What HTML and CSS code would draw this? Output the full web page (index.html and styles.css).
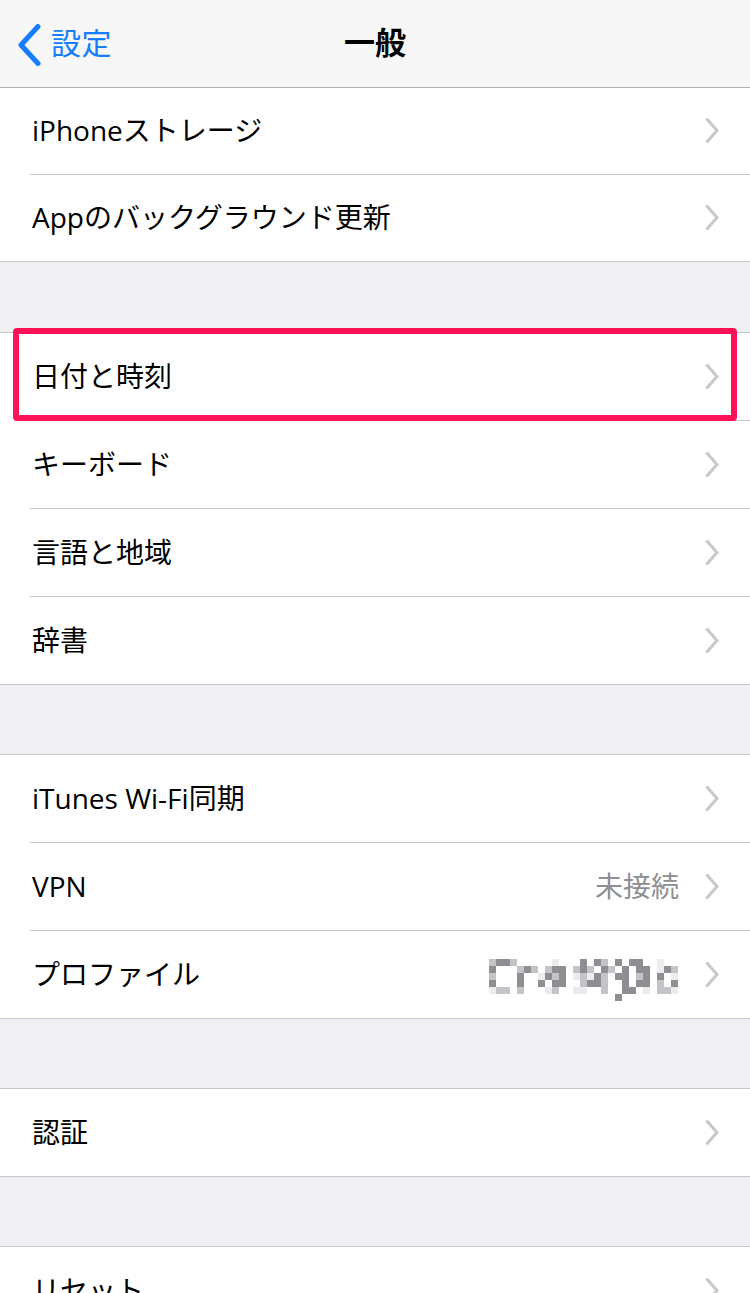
FILE: index.html
```html
<!DOCTYPE html>
<html lang="ja">
<head>
    <meta charset="UTF-8">
    <meta name="viewport" content="width=device-width, initial-scale=1.0">
    <title>一般</title>
    <link rel="stylesheet" href="styles.css">
</head>
<body>
    <div class="screen">
        <header class="navbar">
            <a class="back">
                <svg class="back-icon" width="26" height="44" viewBox="0 0 26 44">
                    <path d="M22 3.5 L5 22 L22 40.5" fill="none" stroke="#147efb" stroke-width="5" stroke-linecap="round" stroke-linejoin="round"/>
                </svg>
                <span>設定</span>
            </a>
            <h1 class="title">一般</h1>
            <span></span>
        </header>

        <section class="group group-top">
            <div class="row">
                <div class="row-body">
                    <span class="label">iPhoneストレージ</span>
                    <svg class="chevron" width="14" height="27" viewBox="0 0 14 27"><path d="M1.5 1.5 L12 13.5 L1.5 25.5"/></svg>
                </div>
            </div>
            <div class="row">
                <div class="row-body">
                    <span class="label">Appのバックグラウンド更新</span>
                    <svg class="chevron" width="14" height="27" viewBox="0 0 14 27"><path d="M1.5 1.5 L12 13.5 L1.5 25.5"/></svg>
                </div>
            </div>
        </section>

        <section class="group group-first">
            <div class="row marked">
                <div class="row-body">
                    <span class="label">日付と時刻</span>
                    <svg class="chevron" width="14" height="27" viewBox="0 0 14 27"><path d="M1.5 1.5 L12 13.5 L1.5 25.5"/></svg>
                </div>
                <div class="highlight"></div>
            </div>
            <div class="row">
                <div class="row-body">
                    <span class="label">キーボード</span>
                    <svg class="chevron" width="14" height="27" viewBox="0 0 14 27"><path d="M1.5 1.5 L12 13.5 L1.5 25.5"/></svg>
                </div>
            </div>
            <div class="row">
                <div class="row-body">
                    <span class="label">言語と地域</span>
                    <svg class="chevron" width="14" height="27" viewBox="0 0 14 27"><path d="M1.5 1.5 L12 13.5 L1.5 25.5"/></svg>
                </div>
            </div>
            <div class="row">
                <div class="row-body">
                    <span class="label">辞書</span>
                    <svg class="chevron" width="14" height="27" viewBox="0 0 14 27"><path d="M1.5 1.5 L12 13.5 L1.5 25.5"/></svg>
                </div>
            </div>
        </section>

        <section class="group">
            <div class="row">
                <div class="row-body">
                    <span class="label">iTunes Wi-Fi同期</span>
                    <svg class="chevron" width="14" height="27" viewBox="0 0 14 27"><path d="M1.5 1.5 L12 13.5 L1.5 25.5"/></svg>
                </div>
            </div>
            <div class="row">
                <div class="row-body">
                    <span class="label">VPN</span>
                    <span class="value">未接続</span>
                    <svg class="chevron" width="14" height="27" viewBox="0 0 14 27"><path d="M1.5 1.5 L12 13.5 L1.5 25.5"/></svg>
                </div>
            </div>
            <div class="row">
                <div class="row-body">
                    <span class="label">プロファイル</span>
                    <!-- profile name is pixelated in the source shot -->
                    <svg class="mosaic" width="189" height="42" viewBox="0 0 27 6" shape-rendering="crispEdges">
                        <path fill="#ececee" d="M9 0h1v1h-1z M24 0h1v1h-1z M24 1h1v1h-1z M7 2h1v1h-1z M12 2h1v1h-1z M14 2h1v1h-1z M26 2h1v1h-1z M0 4h1v1h-1z M8 4h1v1h-1z M12 4h2v1h-2z M22 4h1v1h-1z M26 4h1v1h-1z"/>
                        <path fill="#c4c4c8" d="M0 0h1v1h-1z M3 0h1v1h-1z M16 0h1v1h-1z M4 1h1v1h-1z M6 1h1v1h-1z M8 1h1v1h-1z M12 1h1v1h-1z M14 1h1v1h-1z M17 1h1v1h-1z M26 1h1v1h-1z M0 2h1v1h-1z M9 2h1v1h-1z M13 2h1v1h-1z M16 2h1v1h-1z M21 2h1v1h-1z M13 3h1v1h-1z M16 3h1v1h-1z M24 3h1v1h-1z M1 4h2v1h-2z M4 4h1v1h-1z M9 4h1v1h-1z M16 4h1v1h-1z M24 4h2v1h-2z"/>
                        <path fill="#8e8e93" d="M1 0h2v1h-2z M13 0h1v1h-1z M15 0h1v1h-1z M18 0h1v1h-1z M20 0h2v1h-2z M0 1h1v1h-1z M5 1h1v1h-1z M9 1h2v1h-2z M13 1h1v1h-1z M16 1h1v1h-1z M19 1h1v1h-1z M21 1h2v1h-2z M25 1h1v1h-1z M4 2h1v1h-1z M8 2h1v1h-1z M10 2h1v1h-1z M15 2h1v1h-1z M18 2h2v1h-2z M22 2h1v1h-1z M24 2h1v1h-1z M0 3h1v1h-1z M4 3h1v1h-1z M7 3h1v1h-1z M9 3h2v1h-2z M14 3h2v1h-2z M19 3h1v1h-1z M21 3h2v1h-2z M26 3h1v1h-1z M19 4h2v1h-2z M18 5h1v1h-1z"/>
                    </svg>
                    <svg class="chevron" width="14" height="27" viewBox="0 0 14 27"><path d="M1.5 1.5 L12 13.5 L1.5 25.5"/></svg>
                </div>
            </div>
        </section>

        <section class="group">
            <div class="row">
                <div class="row-body">
                    <span class="label">認証</span>
                    <svg class="chevron" width="14" height="27" viewBox="0 0 14 27"><path d="M1.5 1.5 L12 13.5 L1.5 25.5"/></svg>
                </div>
            </div>
        </section>

        <section class="group">
            <div class="row">
                <div class="row-body">
                    <span class="label">リセット</span>
                    <svg class="chevron" width="14" height="27" viewBox="0 0 14 27"><path d="M1.5 1.5 L12 13.5 L1.5 25.5"/></svg>
                </div>
            </div>
        </section>
    </div>
</body>
</html>
```

FILE: styles.css
```css
* {
    padding: 0;
    margin: 0;
    box-sizing: border-box;
    font-family: "Open Sans", "Noto Sans CJK JP", sans-serif;
}
body {
    width: 750px;
    height: 1293px;
    overflow: hidden;
    background: #efeff4;
}
.screen {
    width: 750px;
}
.navbar {
    height: 88px;
    display: grid;
    grid-template-columns: 1fr auto 1fr;
    align-items: center;
    background: #f7f7f7;
    border-bottom: 1px solid #b2b2b2;
}
.back {
    display: flex;
    align-items: center;
    padding-left: 16px;
    color: #147efb;
    font-size: 30px;
    line-height: 1;
}
.back-icon {
    margin-right: 9px;
    margin-top: 2px;
}
.back span {
    letter-spacing: 0.5px;
    margin-top: -1px;
}
.title {
    font-size: 31px;
    font-weight: bold;
    line-height: 1;
    color: #000;
    margin-top: -2px;
}
.group {
    background: #fff;
    border-top: 1px solid #c8c7cc;
    border-bottom: 1px solid #c8c7cc;
    margin-top: 69px;
}
.group-top {
    border-top: none;
    margin-top: 0;
}
.group-first {
    margin-top: 70px;
}
.row {
    padding-left: 30px;
}
.row-body {
    height: 88px;
    display: flex;
    align-items: center;
    padding-left: 2px;
    padding-right: 31px;
    border-bottom: 1px solid #c8c7cc;
}
.group-top .row-body {
    height: 87px;
}
.row:last-child .row-body {
    border-bottom: none;
    height: 87px;
}
.group-top .row:last-child .row-body {
    height: 86px;
}
.label {
    flex: 1;
    font-size: 28px;
    line-height: 1.2;
    color: #000;
}
.value {
    font-size: 28px;
    line-height: 1.2;
    color: #8e8e93;
    margin-right: 26px;
}
.mosaic {
    margin-right: 27px;
    margin-top: 10px;
}
.chevron {
    margin-top: -1px;
}
.chevron path {
    fill: none;
    stroke: #c7c7cc;
    stroke-width: 3;
}
.marked {
    position: relative;
}
.highlight {
    position: absolute;
    left: 13px;
    right: 13px;
    top: -5px;
    bottom: 0;
    border: 6px solid #ff1158;
    border-radius: 4px;
}
```
